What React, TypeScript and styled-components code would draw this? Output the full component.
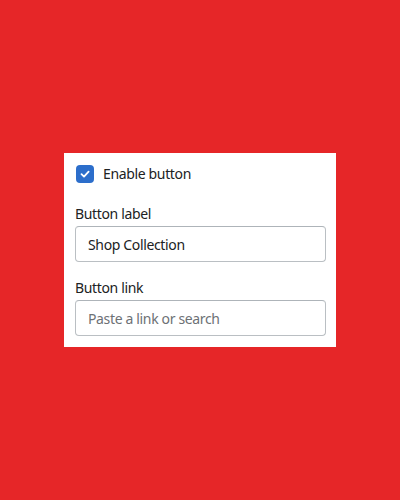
import styled, { createGlobalStyle } from "styled-components";

const GlobalStyle = createGlobalStyle`
    html, body {
        margin: 0;
        padding: 0;
        background: #e62628;
    }
    * {
        box-sizing: border-box;
    }
`;

const Page = styled.div`
    min-height: 100vh;
    display: flex;
    align-items: center;
    justify-content: center;
    font-family: "Noto Sans", "Open Sans", sans-serif;
    font-size: 14px;
    letter-spacing: -0.35px;
    color: #202223;
`;

const Panel = styled.div`
    width: 272px;
    background: #ffffff;
    padding: 11px 10px 11px 11px;
    display: flex;
    flex-direction: column;
`;

const CheckRow = styled.label`
    display: flex;
    align-items: center;
    gap: 9px;
    height: 20px;
    padding-left: 1px;
    line-height: 20px;
    margin-bottom: 20px;
`;

const CheckBox = styled.span<{ checked: boolean }>`
    width: 18px;
    height: 18px;
    border-radius: 4px;
    background: ${(p) => (p.checked ? "#2c6ecb" : "#ffffff")};
    border: ${(p) => (p.checked ? "none" : "1px solid #8c9196")};
    display: flex;
    align-items: center;
    justify-content: center;
`;

const Field = styled.div`
    display: flex;
    flex-direction: column;
    & + & {
        margin-top: 16px;
    }
`;

const Label = styled.div`
    line-height: 20px;
    margin-bottom: 2px;
`;

const Input = styled.input`
    height: 36px;
    width: 100%;
    border: 1px solid #babfc3;
    border-top-color: #aeb4b9;
    border-radius: 4px;
    padding: 0 12px;
    font-family: inherit;
    font-size: 14px;
    letter-spacing: -0.35px;
    color: #202223;
    outline: none;
    &::placeholder {
        color: #6d7175;
    }
`;

const App = () => {
    return <>
        <GlobalStyle />
        <Page>
            <Panel>
                <CheckRow>
                    <CheckBox checked={true}>
                        <svg width="12" height="12" viewBox="0 0 12 12">
                            <path d="M2.5 6.2 L5 8.6 L9.6 3.6" fill="none" stroke="#fff" strokeWidth="1.8" strokeLinecap="round" strokeLinejoin="round" />
                        </svg>
                    </CheckBox>
                    Enable button
                </CheckRow>
                <Field>
                    <Label>Button label</Label>
                    <Input defaultValue="Shop Collection" />
                </Field>
                <Field>
                    <Label>Button link</Label>
                    <Input placeholder="Paste a link or search" />
                </Field>
            </Panel>
        </Page>
    </>
}

export default App;
